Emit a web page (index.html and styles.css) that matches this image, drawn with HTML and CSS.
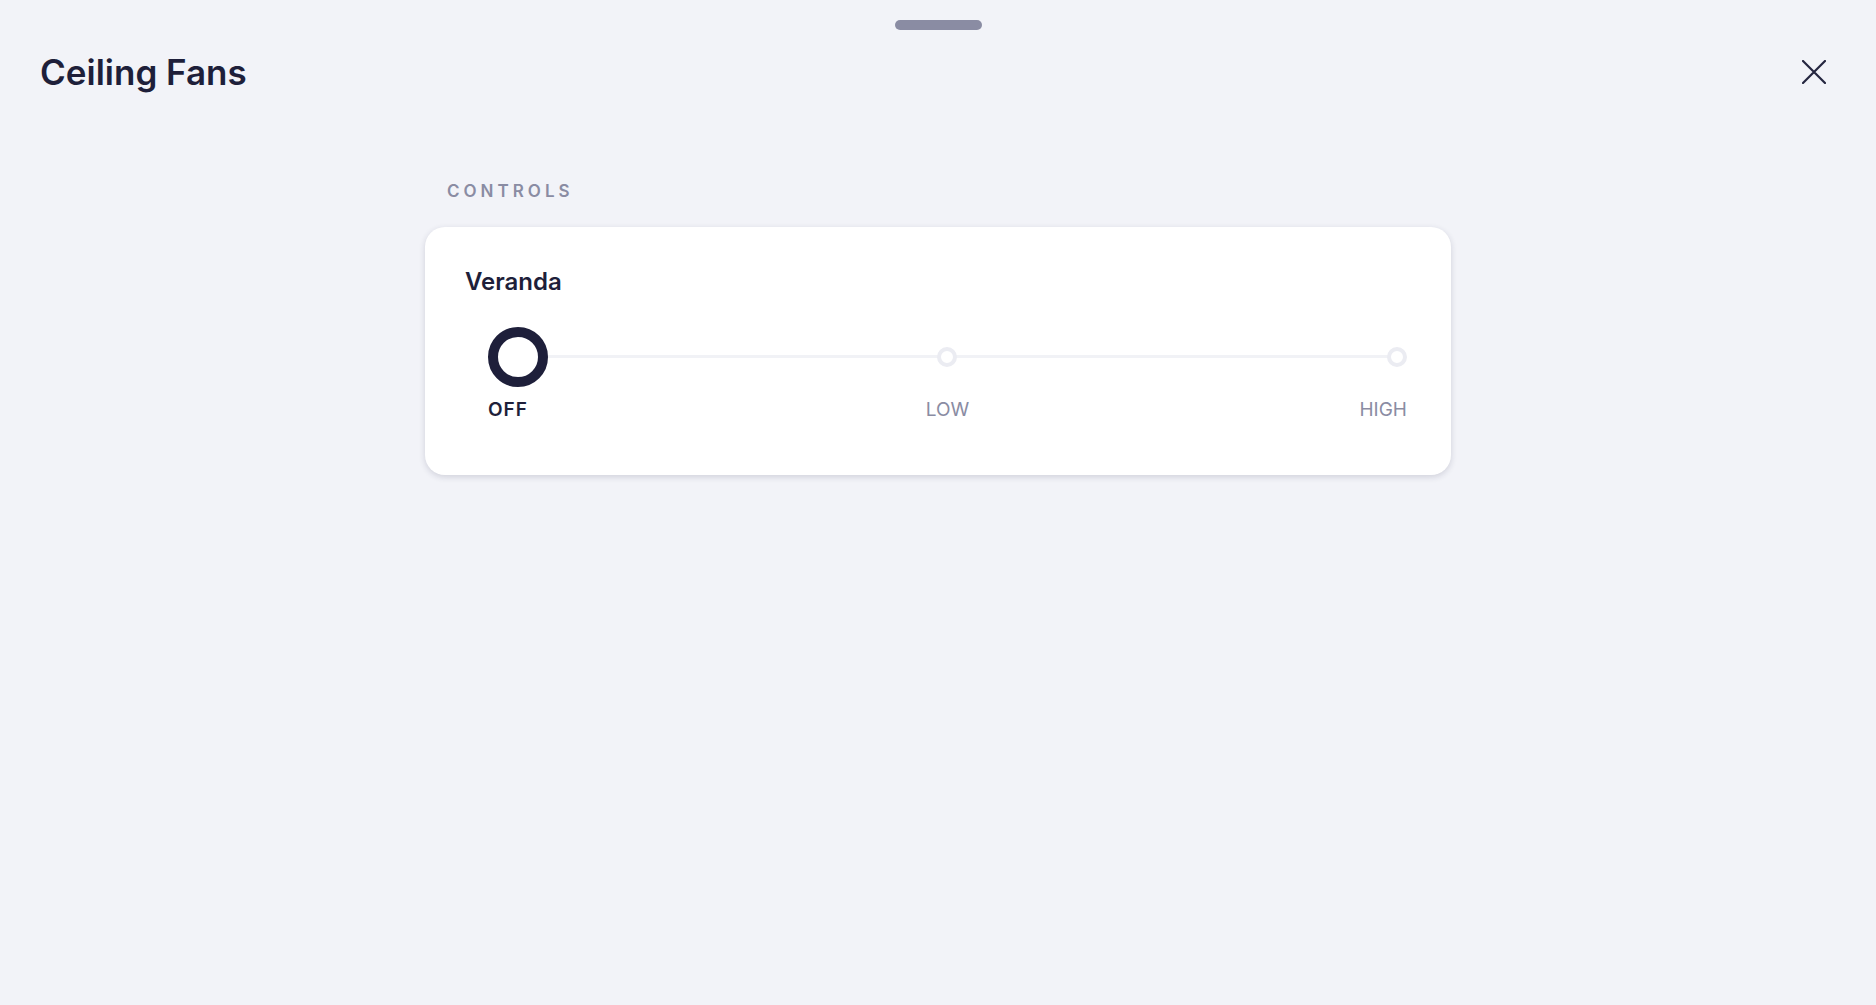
FILE: index.html
```html
<!DOCTYPE html>
<html lang="en">
<head>
    <meta charset="UTF-8">
    <meta name="viewport" content="width=device-width, initial-scale=1.0">
    <title>Ceiling Fans</title>
    <link rel="stylesheet" href="styles.css">
</head>
<body>
    <div class="sheet">
        <div class="handle"></div>

        <div class="header">
            <h1 class="title">Ceiling Fans</h1>
            <button class="close" aria-label="Close">
                <svg width="24" height="24" viewBox="0 0 24 24">
                    <path d="M1 1 L23 23 M23 1 L1 23" stroke="#25263f" stroke-width="2.2" stroke-linecap="round" fill="none"/>
                </svg>
            </button>
        </div>

        <div class="content">
            <div class="section-label">Controls</div>

            <div class="card">
                <div class="card-title">Veranda</div>

                <div class="slider">
                    <div class="stop stop-start">
                        <div class="knob-row"><span class="knob knob-active"></span></div>
                        <span class="stop-label stop-label-active">OFF</span>
                    </div>
                    <div class="stop stop-middle">
                        <div class="knob-row"><span class="knob"></span></div>
                        <span class="stop-label">LOW</span>
                    </div>
                    <div class="stop stop-end">
                        <div class="knob-row"><span class="knob"></span></div>
                        <span class="stop-label">HIGH</span>
                    </div>
                </div>
            </div>
        </div>
    </div>
</body>
</html>
```

FILE: styles.css
```css
body {
    margin: 0;
    font-family: Inter, Lato, sans-serif;
    background: #f2f3f8;
    color: #1e1f3a;
}
.sheet {
    padding-top: 20px;
    min-height: 985px;
}
.handle {
    width: 87px;
    height: 10px;
    border-radius: 5px;
    background: #8a8ca3;
    margin: 0 auto;
}
.header {
    display: flex;
    justify-content: space-between;
    align-items: center;
    height: 48px;
    margin-top: 18px;
    padding: 0 38px 0 40px;
}
.title {
    margin: 0;
    font-size: 35px;
    line-height: 42px;
    font-weight: 600;
    color: #1e1f3a;
}
.close {
    width: 48px;
    height: 48px;
    padding: 0;
    border: none;
    background: none;
    display: flex;
    align-items: center;
    justify-content: center;
    cursor: pointer;
}
.content {
    width: 1026px;
    margin: 84px auto 0;
}
.section-label {
    padding-left: 22px;
    font-size: 17px;
    line-height: 22px;
    font-weight: 600;
    letter-spacing: 4px;
    text-transform: uppercase;
    color: #8a8ca3;
}
.card {
    margin-top: 25px;
    background: #ffffff;
    border-radius: 20px;
    box-shadow: 0 2px 6px rgba(30, 32, 70, 0.16);
    padding: 40px 44px 53px 40px;
}
.card-title {
    font-size: 24px;
    line-height: 30px;
    font-weight: 600;
    color: #1e1f3a;
}
.slider {
    position: relative;
    display: grid;
    grid-template-columns: repeat(3, 1fr);
    margin: 30px 0 0 23px;
}
.slider::before {
    content: "";
    position: absolute;
    top: 28px;
    left: 30px;
    right: 10px;
    height: 3px;
    background: #f1f2f6;
}
.stop {
    display: flex;
    flex-direction: column;
    gap: 10px;
}
.stop-start {
    align-items: flex-start;
}
.stop-middle {
    align-items: center;
}
.stop-end {
    align-items: flex-end;
}
.knob-row {
    height: 60px;
    display: flex;
    align-items: center;
}
.knob {
    position: relative;
    box-sizing: border-box;
    width: 20px;
    height: 20px;
    border-radius: 50%;
    border: 4px solid #ebecf2;
    background: #ffffff;
}
.knob-active {
    width: 60px;
    height: 60px;
    border: 10px solid #1e1f3a;
}
.stop-label {
    font-size: 19px;
    line-height: 25px;
    color: #8a8ca3;
}
.stop-label-active {
    font-weight: 600;
    letter-spacing: 1px;
    color: #1e1f3a;
}
```
